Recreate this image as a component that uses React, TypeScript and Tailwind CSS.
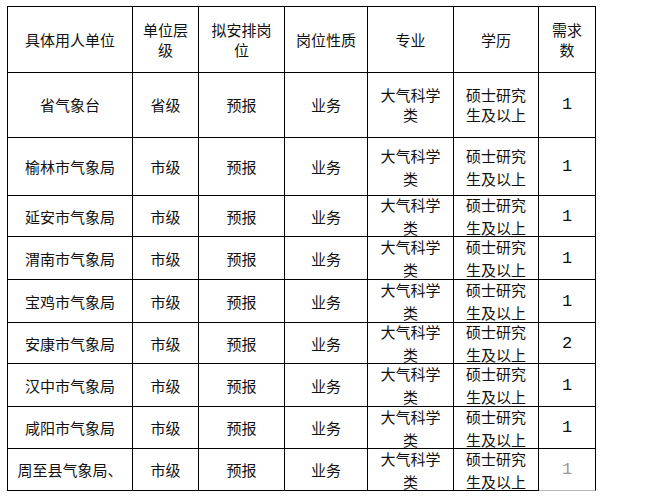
import React from "react";

const headers: string[][] = [
  ["具体用人单位"],
  ["单位层", "级"],
  ["拟安排岗", "位"],
  ["岗位性质"],
  ["专业"],
  ["学历"],
  ["需求", "数"],
];

const units = [
  "省气象台",
  "榆林市气象局",
  "延安市气象局",
  "渭南市气象局",
  "宝鸡市气象局",
  "安康市气象局",
  "汉中市气象局",
  "咸阳市气象局",
  "周至县气象局、",
];
const counts = ["1", "1", "1", "1", "1", "2", "1", "1", "1"];

function Cell({
  lines,
  leading,
  last,
  className = "",
}: {
  lines: string[];
  leading: string;
  last?: boolean;
  className?: string;
}) {
  return (
    <div
      className={
        "flex flex-col items-center justify-center text-center border-r border-b border-black " +
        (last ? "border-b-[#bbbbbb] " : "") +
        className
      }
    >
      {lines.map((l, i) => (
        <div key={i} className={leading}>
          {l}
        </div>
      ))}
    </div>
  );
}

export default function App() {
  return (
    <div className="w-[657px] h-[501px] bg-white pt-[6px] pl-[7px]">
      <div
        className="grid grid-cols-[125px_66px_86px_83px_86px_85px_57px] grid-rows-[66px_65px_58px_41px_43px_43px_41px_43px_42px_42px] border-l border-t border-black w-[589px] text-[15px] text-[#111]"
        style={{ fontFamily: '"Noto Sans CJK SC", "Noto Sans", sans-serif' }}
      >
        {headers.map((h, i) => (
          <Cell key={"h" + i} lines={h} leading="leading-[20px]" />
        ))}
        {units.map((u, r) => {
          const leading = r === 0 ? "leading-[20px]" : "leading-[23px]";
          const lastRow = r === units.length - 1;
          return (
            <React.Fragment key={r}>
              <Cell lines={[u]} leading={leading} />
              <Cell lines={[r === 0 ? "省级" : "市级"]} leading={leading} />
              <Cell lines={["预报"]} leading={leading} />
              <Cell lines={["业务"]} leading={leading} />
              <Cell lines={["大气科学", "类"]} leading={leading} />
              <Cell lines={["硕士研究", "生及以上"]} leading={leading} />
              <Cell
                lines={[counts[r]]}
                leading={leading}
                last={lastRow}
                className={
                  "font-['Liberation_Mono',monospace] text-[17px] " +
                  (lastRow ? "text-[#999]" : "")
                }
              />
            </React.Fragment>
          );
        })}
      </div>
    </div>
  );
}
